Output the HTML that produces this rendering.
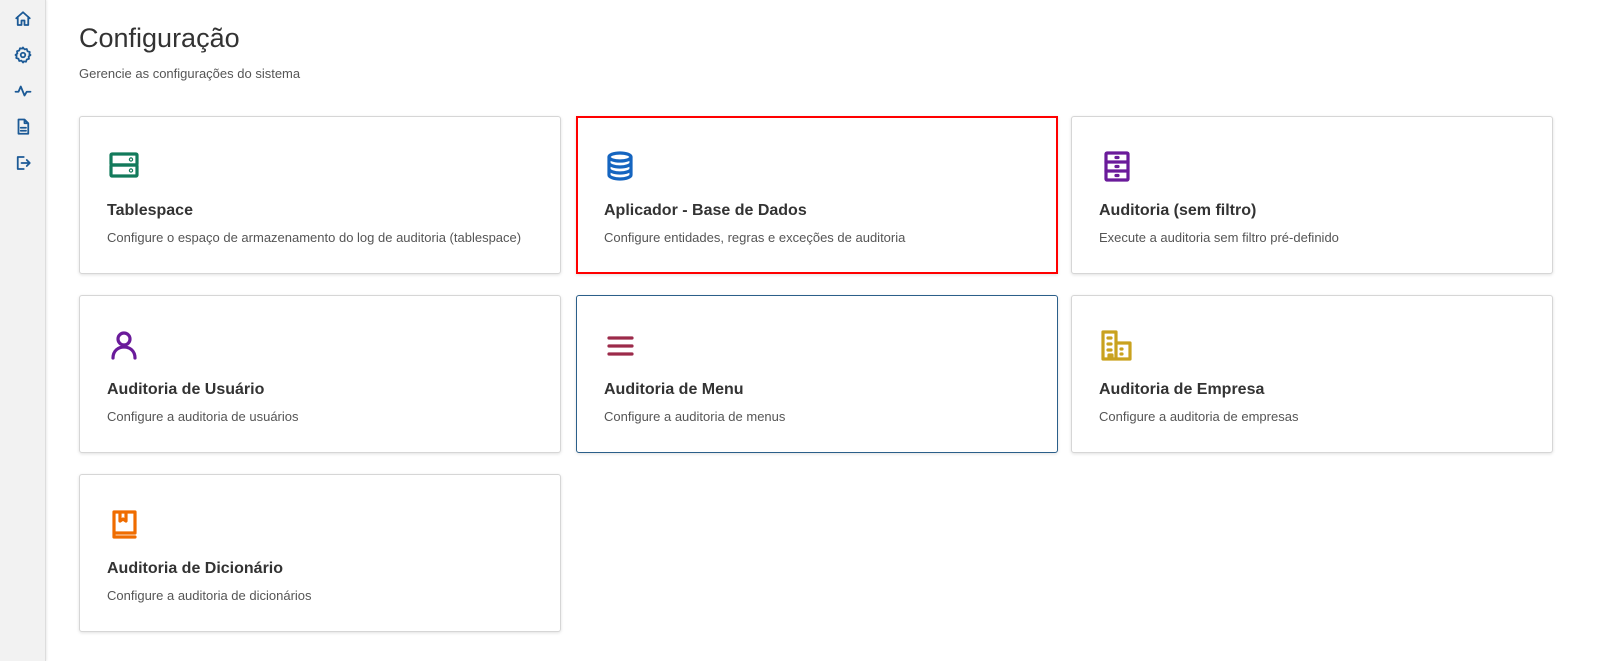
<!DOCTYPE html>
<html><head><meta charset="utf-8"><style>
*{box-sizing:border-box;margin:0;padding:0}
body{width:1606px;height:661px;background:#fff;font-family:"Liberation Sans",sans-serif;position:relative;overflow:hidden}
.side{position:absolute;left:0;top:0;width:46px;height:661px;background:#f2f2f2;border-right:1px solid #ddd;box-shadow:1px 0 2px rgba(0,0,0,.08)}
.side svg{position:absolute;left:14px;width:18px;height:18px;fill:none;stroke:#1c5a96;stroke-width:2.4;stroke-linecap:round;stroke-linejoin:round}
h1{position:absolute;left:79px;top:23px;font-size:27px;font-weight:normal;color:#333}
.sub{position:absolute;left:79px;top:66px;font-size:13px;color:#555}
.card{position:absolute;width:482px;height:158px;background:#fff;border:1px solid #d6d6d6;border-radius:3px;box-shadow:0 1px 3px rgba(0,0,0,.12)}
.card svg{position:absolute;left:28px;top:33px;width:32px;height:32px;fill:none;stroke-width:3.2;stroke-linecap:round;stroke-linejoin:round}
.card .t{position:absolute;left:27px;top:85px;font-size:16px;font-weight:bold;color:#333}
.card .d{position:absolute;left:27px;top:113px;font-size:13px;color:#555}
</style></head><body>
<div class="side">
<svg style="top:10px" viewBox="0 0 24 24"><path d="M3 11L12 3l9 8M5 9v11h5v-6h4v6h5V9"/></svg>
<svg style="top:46px" viewBox="0 0 24 24"><circle cx="12" cy="12" r="3"/><path d="M12 2l2 2.5 3-.5 1 3 3 1-.5 3L22 12l-2.5 2 .5 3-3 1-1 3-3-.5L12 22l-2-2.5-3 .5-1-3-3-1 .5-3L2 12l2.5-2-.5-3 3-1 1-3 3 .5z"/></svg>
<svg style="top:82px" viewBox="0 0 24 24"><path d="M2 13h4l3-7 5 12 3-5h5"/></svg>
<svg style="top:118px" viewBox="0 0 24 24"><path d="M6 2h8l5 5v14H6zM14 2v5h5M9 13h7M9 17h7"/></svg>
<svg style="top:154px" viewBox="0 0 24 24"><path d="M13 4H5v16h8M10 12h11M17 8l4 4-4 4"/></svg>
</div>
<h1>Configuração</h1>
<div class="sub">Gerencie as configurações do sistema</div>

<div class="card" style="left:79px;top:116px"><svg viewBox="0 0 32 32" stroke="#127a5b"><rect x="3" y="4" width="26" height="11" rx="1"/><rect x="3" y="15" width="26" height="11" rx="1"/><circle cx="23" cy="9.5" r=".6"/><circle cx="23" cy="20.5" r=".6"/></svg><div class="t">Tablespace</div><div class="d">Configure o espaço de armazenamento do log de auditoria (tablespace)</div></div>

<div class="card" style="left:576px;top:116px;border:2px solid #f00;border-radius:0"><svg viewBox="0 0 32 32" stroke="#1565c0" style="left:27px;top:32px"><ellipse cx="15" cy="7" rx="11" ry="4"/><path d="M4 7v18c0 2 5 4 11 4s11-2 11-4V7M4 13c0 2 5 4 11 4s11-2 11-4M4 19c0 2 5 4 11 4s11-2 11-4"/></svg><div class="t" style="left:26px;top:84px">Aplicador - Base de Dados</div><div class="d" style="left:26px;top:112px">Configure entidades, regras e exceções de auditoria</div></div>

<div class="card" style="left:1071px;top:116px"><svg viewBox="0 0 32 32" stroke="#6a1b9a"><rect x="6" y="3" width="22" height="27" rx="1"/><path d="M6 12h22M6 21h22M16 7.5h2M16 16.5h2M16 25.5h2"/></svg><div class="t">Auditoria (sem filtro)</div><div class="d">Execute a auditoria sem filtro pré-definido</div></div>

<div class="card" style="left:79px;top:295px"><svg viewBox="0 0 32 32" stroke="#6a1b9a"><circle cx="16" cy="10" r="6"/><path d="M5 29c0-7 5-11 11-11s11 4 11 11"/></svg><div class="t">Auditoria de Usuário</div><div class="d">Configure a auditoria de usuários</div></div>

<div class="card" style="left:576px;top:295px;border-color:#2b5f8a"><svg viewBox="0 0 32 32" stroke="#9c2a4a" stroke-width="3.4"><path d="M4 9h23M4 17h23M4 25h23"/></svg><div class="t">Auditoria de Menu</div><div class="d">Configure a auditoria de menus</div></div>

<div class="card" style="left:1071px;top:295px"><svg viewBox="0 0 32 32" stroke="#c9a21f"><path d="M3 30V3h13v27M3 30h27V14H16M8 9h3M8 15h3M8 21h3M21 20h1M21 25h1M9 30v-4h3v4"/></svg><div class="t">Auditoria de Empresa</div><div class="d">Configure a auditoria de empresas</div></div>

<div class="card" style="left:79px;top:474px"><svg viewBox="0 0 32 32" stroke="#ef6c00"><path d="M6 25V4h21v21H6zM6 25v4h21M12 4v9l3-2 3 2V4"/></svg><div class="t">Auditoria de Dicionário</div><div class="d">Configure a auditoria de dicionários</div></div>
</body></html>
